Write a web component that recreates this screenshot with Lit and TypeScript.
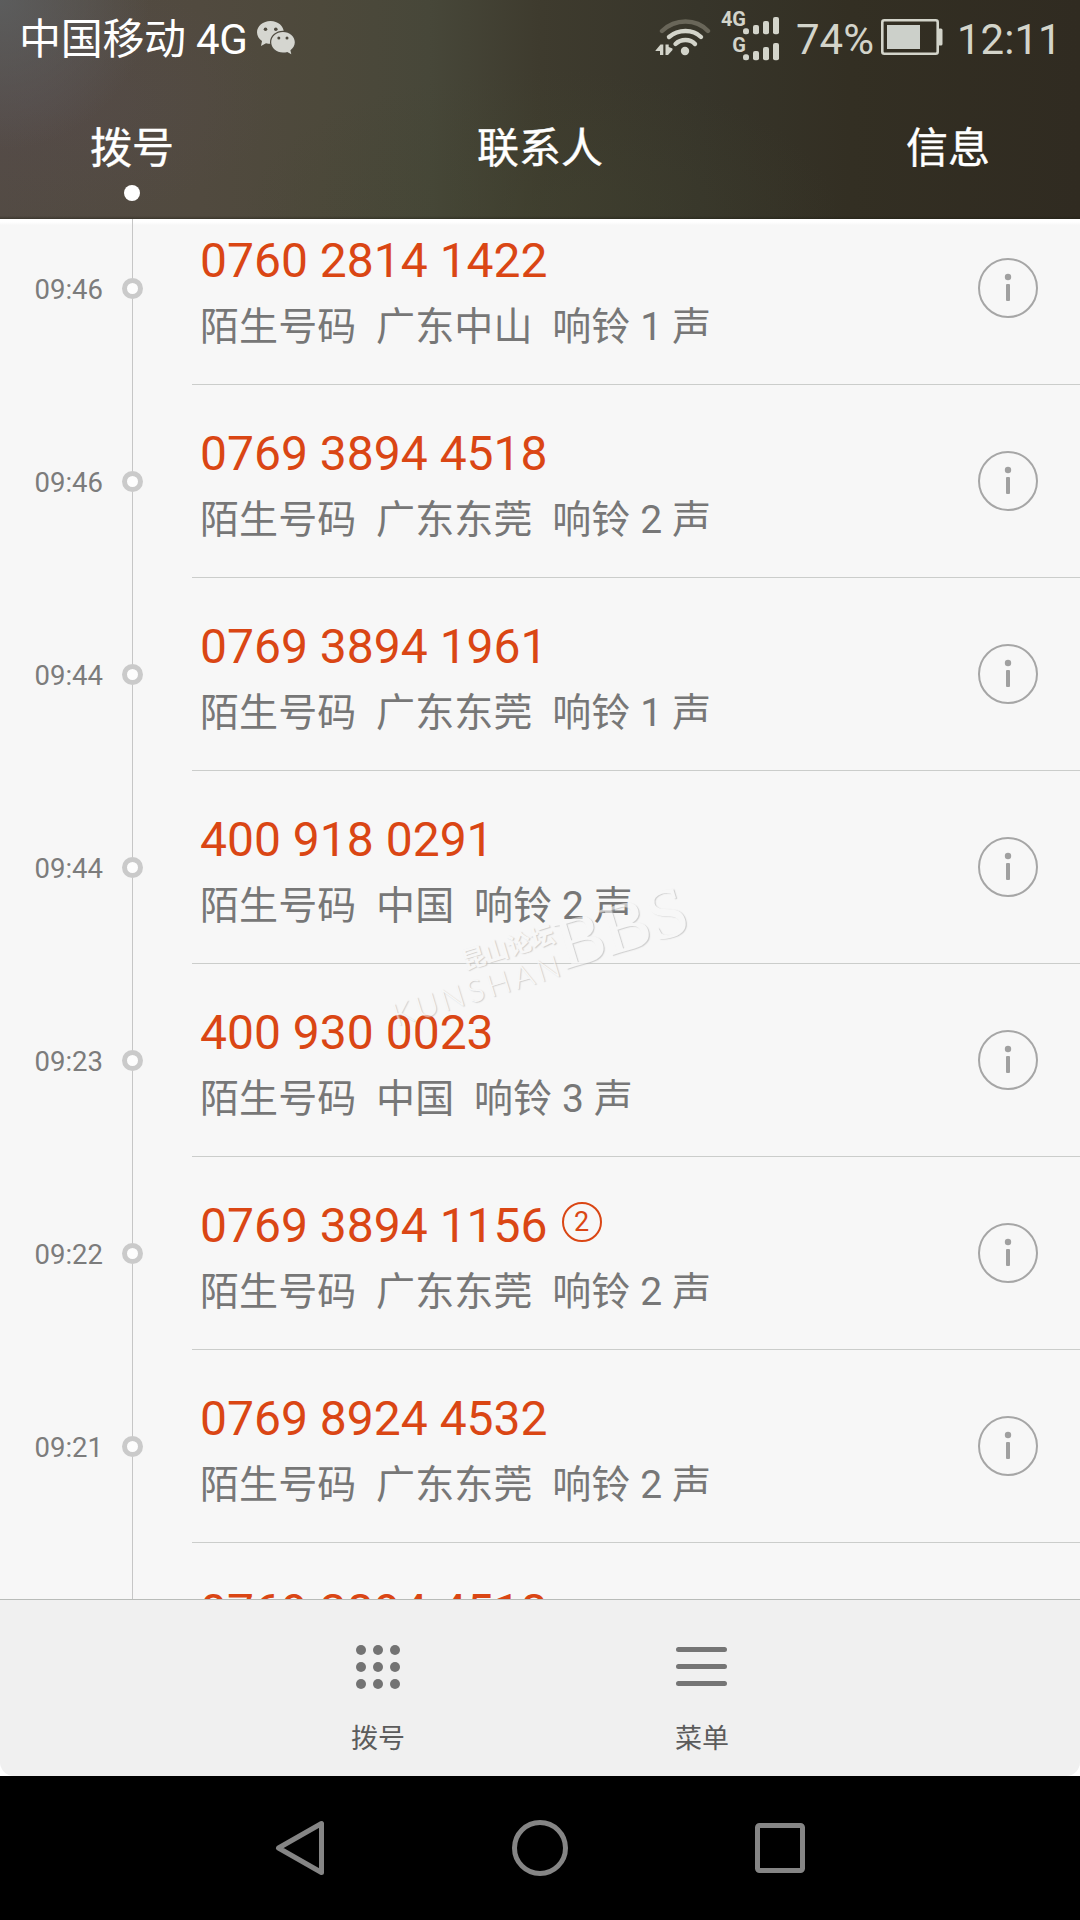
import { LitElement, html, svg, css, nothing } from "lit";
import { customElement, property } from "lit/decorators.js";

interface Call {
  time: string;
  number: string;
  place: string;
  rings: number;
  count?: number;
}

const CALLS: Call[] = [
  { time: "09:46", number: "0760 2814 1422", place: "广东中山", rings: 1 },
  { time: "09:46", number: "0769 3894 4518", place: "广东东莞", rings: 2 },
  { time: "09:44", number: "0769 3894 1961", place: "广东东莞", rings: 1 },
  { time: "09:44", number: "400 918 0291", place: "中国", rings: 2 },
  { time: "09:23", number: "400 930 0023", place: "中国", rings: 3 },
  { time: "09:22", number: "0769 3894 1156", place: "广东东莞", rings: 2, count: 2 },
  { time: "09:21", number: "0769 8924 4532", place: "广东东莞", rings: 2 },
];

/* The next entry, of which only the top of the number shows above the toolbar. */
const NEXT_NUMBER = "0769 3894 4518";

@customElement("status-bar")
class StatusBar extends LitElement {
  static styles = css`
    :host {
      display: flex;
      align-items: flex-start;
      height: 80px;
      color: #d3d4ca;
      font-size: 42px;
      line-height: 60px;
    }
    .carrier {
      color: #fff;
      margin: 10px 0 0 19px;
      width: 238px;
      white-space: nowrap;
      letter-spacing: -0.3px;
    }
    .wechat { margin-top: 20px; }
    .spacer { flex: 1; }
    .wifi { margin-top: 16px; }
    .signals {
      display: flex;
      flex-direction: column;
      width: 69px;
      margin: 9px 0 0 0;
    }
    .signal {
      display: flex;
      justify-content: flex-end;
      align-items: flex-end;
      height: 26px;
      font: 700 20px/20px Roboto, sans-serif;
    }
    .gen { height: 26px; line-height: 21px; margin-right: -4px; }
    .percent { margin: 10px 0 0 16px; width: 85px; }
    .battery { margin-top: 19px; }
    .clock { margin: 10px 19px 0 14px; width: 104px; white-space: nowrap; }
  `;

  render() {
    return html`
      <span class="carrier">中国移动 4G</span>
      <svg class="wechat" width="40" height="36" viewBox="0 0 40 36">
        <path fill="#d5d6d0" d="M13.5 1C6 1 0 6 0 12.3c0 3.6 1.9 6.7 5 8.8L4 26l5-2.8c1.5.4 3 .6 4.5.6 7.5 0 13.3-5 13.3-11.4S21 1 13.5 1z" />
        <ellipse cx="26" cy="22.3" rx="13" ry="11.6" fill="#4f4b40" />
        <path fill="#d5d6d0" d="M26 12c-6.6 0-11.8 4.6-11.8 10.3S19.4 32.6 26 32.6c1.5 0 3-.2 4.3-.7l4 2.3-.9-4c2.7-1.9 4.4-4.7 4.4-7.9C37.8 16.6 32.6 12 26 12z" />
        <g fill="#4f4b40">
          <circle cx="8.5" cy="9.3" r="1.8" /><circle cx="18.8" cy="9.3" r="1.8" />
          <circle cx="21.8" cy="18" r="1.5" /><circle cx="30" cy="18" r="1.5" />
        </g>
      </svg>
      <span class="spacer"></span>
      <svg class="wifi" width="56" height="42" viewBox="0 0 56 42">
        <g fill="none" stroke="#d3d4ca" stroke-width="4.4" stroke-linecap="round">
          <path stroke="#696659" d="M7 15Q17 5.500 30.500 5.500T53 15" />
          <path d="M14 21Q21 15 30.500 15T46 21" />
          <path d="M20.500 28Q24.500 24 30.500 24T40 28" />
        </g>
        <circle cx="30" cy="35" r="4.2" fill="#d3d4ca" />
        <path fill="#d3d4ca" d="M0.500 34.500L5.500 28.500h2.800V39H5v-4H0.500zM10.500 28.500h3.200V31L17.500 32.500v1.500L13 39h-2.500z" />
      </svg>
      <div class="signals">
        ${["4G", "G"].map(
          (gen) => html`<div class="signal">
            <span class="gen">${gen}</span>
            <svg width="38" height="26" viewBox="0 0 38 26" fill="currentColor">
              <rect x="1" y="19.3" width="6" height="6" rx="2.5" />
              <rect x="11" y="16" width="6" height="9.3" rx="2" />
              <rect x="21" y="12" width="6" height="13.3" rx="2" />
              <rect x="31" y="8" width="6" height="17.3" rx="2" />
            </svg>
          </div>`
        )}
      </div>
      <span class="percent">74%</span>
      <svg class="battery" width="62" height="36" viewBox="0 0 62 36">
        <rect x="1.3" y="1.3" width="55.4" height="33.4" rx="2" fill="none" stroke="#d3d4ca" stroke-width="2.6" />
        <rect x="6" y="6" width="33" height="24" fill="#ccd0ca" />
        <rect x="57" y="9.5" width="4.5" height="17" rx="1.5" fill="#d3d4ca" />
      </svg>
      <span class="clock">12:11</span>
    `;
  }
}

@customElement("call-row")
class CallRow extends LitElement {
  @property({ attribute: false }) call!: Call;

  static styles = css`
    :host {
      display: flex;
      height: 193px;
      flex: none;
    }
    .time {
      box-sizing: border-box;
      width: 122px;
      padding: 2px 0 0 34.5px;
      align-self: center;
      font-size: 27.5px;
      line-height: 32px;
      color: #7c7c7c;
    }
    .track {
      width: 21px;
      margin-right: 49px;
      display: flex;
      flex-direction: column;
      align-items: center;
    }
    .line { width: 1px; flex: 1; background: #c6c6c6; }
    .ring {
      box-sizing: border-box;
      width: 21px;
      height: 21px;
      border: 5.5px solid #cacaca;
      border-radius: 50%;
      background: #fdfdfd;
    }
    .body {
      flex: 1;
      display: flex;
      justify-content: space-between;
      align-items: center;
      border-bottom: 1px solid #cbcdcb;
      padding: 0 42px 0 8px;
    }
    .text { align-self: flex-start; padding-top: 41px; }
    .number {
      display: flex;
      font-size: 48px;
      line-height: 56px;
      color: #da4614;
      white-space: nowrap;
    }
    .count {
      box-sizing: border-box;
      width: 40px;
      height: 40px;
      margin: 4px 0 0 14px;
      border: 2px solid #da4614;
      border-radius: 50%;
      font-size: 27px;
      line-height: 37px;
      text-align: center;
    }
    .detail {
      margin-top: 13px;
      font-size: 39px;
      line-height: 50px;
      letter-spacing: 0.12px;
      color: #777;
      white-space: pre;
    }
  `;

  render() {
    const c = this.call;
    return html`
      <span class="time">${c.time}</span>
      <div class="track">
        <span class="line"></span><span class="ring"></span><span class="line"></span>
      </div>
      <div class="body">
        <div class="text">
          <div class="number">${c.number}${c.count ? html`<span class="count">${c.count}</span>` : nothing}</div>
          <div class="detail">${`陌生号码  ${c.place}  响铃 ${c.rings} 声`}</div>
        </div>
        <svg width="60" height="60" viewBox="0 0 60 60">
          <circle cx="30" cy="30" r="29" fill="none" stroke="#a6a6a6" stroke-width="2" />
          <circle cx="30" cy="19" r="3.2" fill="#a0a0a0" />
          <rect x="28" y="26" width="4" height="17" rx="1" fill="#a0a0a0" />
        </svg>
      </div>
    `;
  }
}

const dot = (x: number, y: number) => svg`<circle cx=${x} cy=${y} r="5" />`;

@customElement("app-root")
class AppRoot extends LitElement {
  static styles = css`
    :host {
      display: flex;
      flex-direction: column;
      position: relative;
      width: 1080px;
      height: 1920px;
      overflow: hidden;
      background: #000;
      font-family: Roboto, "Noto Sans CJK SC", sans-serif;
    }
    .header {
      height: 219px;
      flex: none;
      color: #fff;
      background:
        linear-gradient(to bottom, transparent 216px, rgba(25, 25, 15, 0.4) 219px),
        radial-gradient(circle at 0 0, rgba(94, 97, 99, 0.8), transparent 150px),
        radial-gradient(ellipse 240px 120px at 40px 100px, rgba(88, 76, 80, 0.4), transparent),
        radial-gradient(ellipse 300px 150px at 540px 219px, rgba(66, 70, 48, 0.4), transparent),
        linear-gradient(to right, #534b44 0, #514a3f 200px, #4d493b 320px, #474739 430px, #3e3b2e 540px, #37352a 700px, #332f23 850px, #302b21 1080px);
    }
    .tabs {
      display: grid;
      grid-template-columns: 264px 1fr 264px;
      padding-top: 39px;
      font-size: 42px;
      line-height: 60px;
    }
    .tab { display: flex; flex-direction: column; align-items: center; -webkit-text-stroke: 0.4px #fff; }
    .dot { width: 16px; height: 16px; border-radius: 50%; background: #fff; margin-top: 6px; }
    .list {
      flex: 1;
      min-height: 0;
      overflow: hidden;
      display: flex;
      flex-direction: column;
      background: linear-gradient(to bottom, #fff 3px, #f7f7f7 6px);
    }
    .list call-row:first-child { margin-top: -27px; }
    .next { display: flex; flex: none; height: 56px; }
    .next-line { width: 1px; margin: 0 67px 0 132px; background: #c6c6c6; }
    .next-number {
      padding-top: 41px;
      font-size: 48px;
      line-height: 56px;
      color: #da4614;
    }
    .sheet { flex: none; height: 177px; background: #fff; }
    .toolbar {
      box-sizing: border-box;
      height: 177px;
      display: flex;
      justify-content: center;
      border-top: 1px solid #b9bcb9;
      border-radius: 0 0 14px 14px;
      background: #f0f0f0;
      font-size: 27px;
      line-height: 36px;
      color: #5c5c5c;
    }
    .tool { width: 324px; display: flex; flex-direction: column; align-items: center; padding-top: 42px; gap: 29px; }
    .nav {
      height: 144px;
      flex: none;
      display: flex;
      justify-content: center;
      align-items: center;
      gap: 180px;
    }
    .watermark {
      position: absolute;
      left: 398px;
      top: 964px;
      display: flex;
      align-items: flex-end;
      transform: rotate(-17deg);
      transform-origin: 0 100%;
      color: #f8f8f8;
      text-shadow: 1px 1px 1px #b4b4b4;
      opacity: 0.6;
      white-space: nowrap;
    }
    .names { display: flex; flex-direction: column; align-items: flex-end; }
    .cn { font-size: 24px; line-height: 26px; font-weight: 700; }
    .en { font: 300 31px/34px Lato, sans-serif; letter-spacing: 4px; }
    .bbs { font: 71px/66px "Liberation Serif", serif; margin-bottom: 1px; }
  `;

  render() {
    return html`
      <div class="header">
        <status-bar></status-bar>
        <div class="tabs">
          <div class="tab">拨号<span class="dot"></span></div>
          <div class="tab">联系人</div>
          <div class="tab">信息</div>
        </div>
      </div>
      <div class="list">
        ${CALLS.map((c) => html`<call-row .call=${c}></call-row>`)}
        <div class="next">
          <span class="next-line"></span>
          <span class="next-number">${NEXT_NUMBER}</span>
        </div>
      </div>
      <div class="sheet">
        <div class="toolbar">
          <div class="tool">
            <svg width="52" height="50" viewBox="0 0 52 50" fill="#737373">
              ${[8, 25, 42].map((y) => [9, 26, 43].map((x) => dot(x, y)))}
            </svg>
            <span>拨号</span>
          </div>
          <div class="tool">
            <svg width="52" height="50" viewBox="0 0 52 50" stroke="#757575" stroke-width="5" stroke-linecap="round">
              <path d="M2.5 7.5H48.5M2.5 24.5H48.5M2.5 41.5H48.5" />
            </svg>
            <span>菜单</span>
          </div>
        </div>
      </div>
      <div class="nav">
        <svg width="60" height="60" viewBox="0 0 60 60" fill="none" stroke="#858585" stroke-width="5" stroke-linejoin="round">
          <path d="M8.5 30L51.5 5.5V54.5z" />
        </svg>
        <svg width="60" height="60" viewBox="0 0 60 60" fill="none" stroke="#858585" stroke-width="5">
          <circle cx="30" cy="30" r="25.5" />
        </svg>
        <svg width="60" height="60" viewBox="0 0 60 60" fill="none" stroke="#858585" stroke-width="5">
          <rect x="7.5" y="7.5" width="45" height="45" rx="2" />
        </svg>
      </div>
      <div class="watermark">
        <div class="names">
          <span class="cn">昆山论坛</span>
          <span class="en">KUNSHAN</span>
        </div>
        <span class="bbs">BBS</span>
      </div>
    `;
  }
}
